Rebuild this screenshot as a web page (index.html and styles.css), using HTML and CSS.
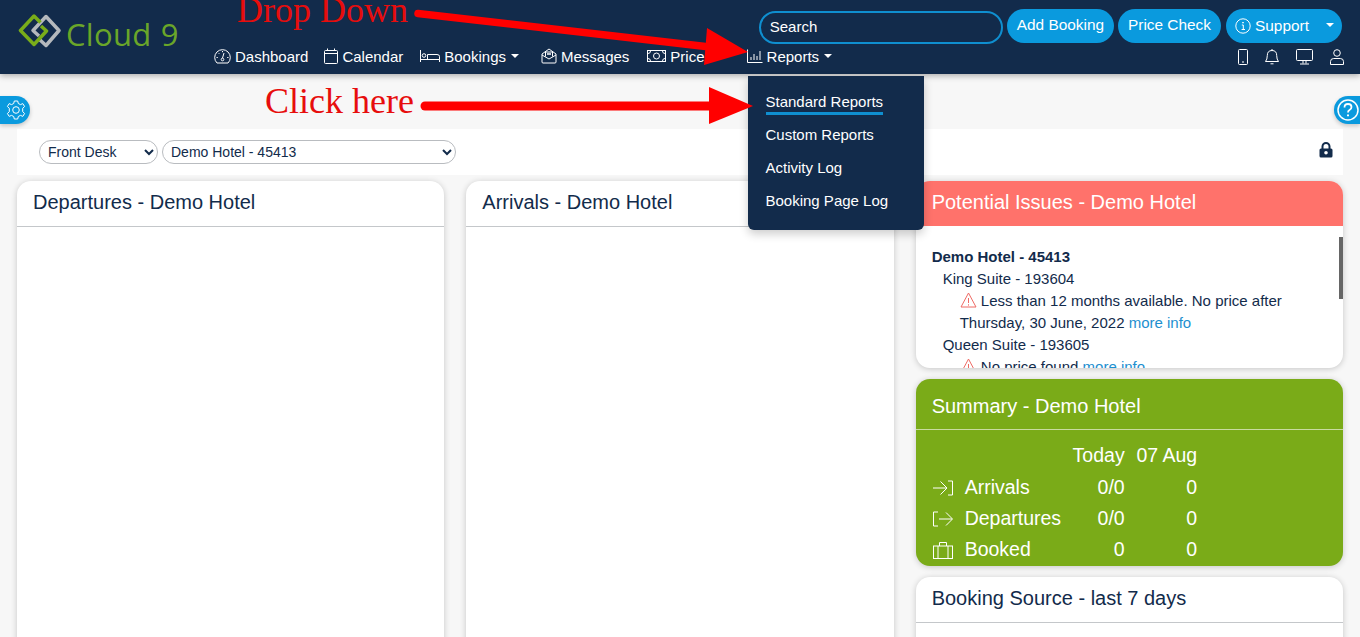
FILE: index.html
```html
<!DOCTYPE html>
<html lang="en">

<head>
    <meta charset="UTF-8">
    <meta name="viewport" content="width=device-width, initial-scale=1.0">
    <title>Cloud 9</title>
    <link rel="stylesheet" href="styles.css">
</head>

<body>
    <header class="topbar">
        <a class="logo">
            <svg class="logo-mark" width="44" height="34" viewBox="0 0 44 34" fill="none" stroke-width="3.500" stroke-linejoin="round">
                <path d="M21 25 L28 31.500 L41 16.500 L28 2.500 L15 16.500 L21 22" stroke="#b5b9bd" />
                <path d="M22.500 8.500 L16 2 L2.500 16.500 L16 30.500 L28.500 17 L23 12" stroke="#79ad1a" />
            </svg>
            <span class="logo-text">Cloud 9</span>
        </a>
        <div class="topbar-main">
            <div class="topbar-actions">
                <div class="search">Search</div>
                <button class="pill">Add Booking</button>
                <button class="pill">Price Check</button>
                <button class="pill pill-support">
                    <svg class="icon" width="16" height="16" viewBox="0 0 16 16">
                        <circle cx="8" cy="8" r="7.200" />
                        <path d="M6.800 7 H8.300 V11.500 M6.600 11.500 H10" />
                        <path d="M8 4 V5.200" stroke-width="1.600" />
                    </svg>
                    Support
                    <span class="caret caret-support"></span>
                </button>
            </div>
            <div class="topbar-nav">
                <nav class="nav">
                    <a class="nav-link">
                        <svg class="icon" width="17" height="16" viewBox="0 0 17 16">
                            <path d="M3 15 A7.800 7.800 0 1 1 14 15 Z" />
                            <path d="M8.500 10 L10 5 M2.500 9.500 H3.800 M13.200 9.500 H14.500 M4.500 5 L5.300 5.800 M8.500 3 V4.200" />
                            <circle cx="8.500" cy="11.500" r="1.300" />
                        </svg>
                        Dashboard
                    </a>
                    <a class="nav-link">
                        <svg class="icon" width="14" height="16" viewBox="0 0 14 16">
                            <rect x="0.500" y="2.500" width="13" height="13" rx="1" />
                            <path d="M0.500 5.500 H13.500 M3.500 0.500 V2.500 M10.500 0.500 V2.500" />
                        </svg>
                        Calendar
                    </a>
                    <a class="nav-link">
                        <svg class="icon" width="20" height="14" viewBox="0 0 20 14">
                            <path d="M0.500 1 V13 M0.500 10.500 H19.500 V13 M19.500 10.500 V7.500 Q19.500 5.500 17 5.500 H7.500 V10" />
                            <circle cx="4" cy="6.500" r="1.800" />
                        </svg>
                        Bookings
                        <span class="caret"></span>
                    </a>
                    <a class="nav-link">
                        <svg class="icon" width="16" height="16" viewBox="0 0 16 16">
                            <path d="M1 6 L8 1 L15 6 V14 Q15 15 14 15 H2 Q1 15 1 14 Z" />
                            <path d="M1 7 L8 11 L15 7 M4.500 8.500 V4 H11.500 V8.500" />
                            <path d="M6 6 H10" stroke-width="1.500" />
                        </svg>
                        Messages
                    </a>
                    <a class="nav-link">
                        <svg class="icon" width="19" height="14" viewBox="0 0 19 14">
                            <rect x="0.500" y="1.500" width="18" height="11" />
                            <circle cx="9.500" cy="7" r="3" />
                            <path d="M1 4.500 Q3.500 4.500 3.500 2 M18 4.500 Q15.500 4.500 15.500 2 M1 9.500 Q3.500 9.500 3.500 12 M18 9.500 Q15.500 9.500 15.500 12" />
                        </svg>
                        Price
                    </a>
                    <a class="nav-link nav-reports">
                        <svg class="icon" width="16" height="14" viewBox="0 0 16 14">
                            <path d="M0.500 0.500 V13.500 H15.500 M4 11 V8 M7 11 V5 M10 11 V7 M13 11 V2" />
                        </svg>
                        Reports
                        <span class="caret"></span>
                    </a>
                </nav>
                <div class="nav-tools">
                    <svg class="icon" width="10" height="16" viewBox="0 0 10 16">
                        <rect x="0.500" y="0.500" width="9" height="15" rx="1" />
                        <path d="M4.300 13 H5.700" stroke-width="1.400" />
                    </svg>
                    <svg class="icon" width="14" height="16" viewBox="0 0 14 16">
                        <path d="M0.500 12.500 Q2.300 10.500 2.300 6.500 Q2.300 1.500 7 1.500 Q11.700 1.500 11.700 6.500 Q11.700 10.500 13.500 12.500 Z" />
                        <path d="M5.500 14.800 H8.500 M7 0 V1.500" />
                    </svg>
                    <svg class="icon" width="17" height="16" viewBox="0 0 17 16">
                        <rect x="0.500" y="0.500" width="16" height="11" rx="1" />
                        <path d="M7 12 V14.500 M10 12 V14.500 M4 15 H13" />
                    </svg>
                    <svg class="icon" width="14" height="16" viewBox="0 0 14 16">
                        <circle cx="7" cy="4" r="3.300" />
                        <path d="M0.500 15.500 V12.500 Q0.500 9.500 3.700 9.500 H10.300 Q13.500 9.500 13.500 12.500 V15.500 Z" />
                    </svg>
                </div>
            </div>
        </div>
    </header>

    <div class="menu">
        <a class="menu-item menu-item-active">Standard Reports</a>
        <a class="menu-item">Custom Reports</a>
        <a class="menu-item">Activity Log</a>
        <a class="menu-item">Booking Page Log</a>
    </div>

    <a class="side-tab side-tab-left">
        <svg class="icon" width="20" height="20" viewBox="0 0 20 20">
            <path d="M8.300 1 H11.700 L12.300 3.500 L14.500 4.600 L16.800 3.600 L18.600 6.500 L16.700 8.300 V11.700 L18.600 13.500 L16.800 16.400 L14.500 15.400 L12.300 16.500 L11.700 19 H8.300 L7.700 16.500 L5.500 15.400 L3.200 16.400 L1.400 13.500 L3.300 11.700 V8.300 L1.400 6.500 L3.200 3.600 L5.500 4.600 L7.700 3.500 Z" stroke-linejoin="round" />
            <circle cx="10" cy="10" r="3.300" />
        </svg>
    </a>
    <a class="side-tab side-tab-right">
        <svg class="icon" width="22" height="22" viewBox="0 0 22 22">
            <circle cx="11" cy="11" r="10" stroke-width="1.500" />
            <path d="M7.500 8.500 Q7.500 5 11 5 Q14.500 5 14.500 8 Q14.500 10 12.500 11 Q11 11.800 11 13.500" stroke-width="1.800" />
            <path d="M11 15.500 V17.300" stroke-width="2" />
        </svg>
    </a>

    <main class="page">
        <div class="toolbar">
            <select class="picker picker-role">
                <option>Front Desk</option>
            </select>
            <select class="picker picker-hotel">
                <option>Demo Hotel - 45413</option>
            </select>
            <svg class="lock" width="14" height="16" viewBox="0 0 14 16">
                <path d="M3.500 7 V4.500 A3.500 3.500 0 0 1 10.500 4.500 V7" fill="none" stroke="#122b4b" stroke-width="2" />
                <path fill-rule="evenodd" d="M2 6.500 H12 Q13.500 6.500 13.500 8 V14 Q13.500 15.500 12 15.500 H2 Q0.500 15.500 0.500 14 V8 Q0.500 6.500 2 6.500 Z M7 9 A1.800 1.800 0 1 0 7 12.600 A1.800 1.800 0 1 0 7 9 Z" fill="#122b4b" />
            </svg>
        </div>

        <div class="columns">
            <section class="card card-tall">
                <h2 class="card-title">Departures - Demo Hotel</h2>
            </section>
            <section class="card card-tall">
                <h2 class="card-title">Arrivals - Demo Hotel</h2>
            </section>
            <div class="stack">
                <section class="card card-issues">
                    <h2 class="card-title">Potential Issues - Demo Hotel</h2>
                    <div class="issues">
                        <div class="issues-hotel">Demo Hotel - 45413</div>
                        <div class="issues-room">King Suite - 193604</div>
                        <div class="issues-note">
                            <svg class="warn" width="17" height="16" viewBox="0 0 17 16">
                                <path d="M8.500 1 L16 15 H1 Z M8.500 6 V11 M8.500 12.300 V13.600" />
                            </svg>
                            Less than 12 months available. No price after Thursday, 30 June, 2022 <a class="link">more info</a>
                        </div>
                        <div class="issues-room">Queen Suite - 193605</div>
                        <div class="issues-note">
                            <svg class="warn" width="17" height="16" viewBox="0 0 17 16">
                                <path d="M8.500 1 L16 15 H1 Z M8.500 6 V11 M8.500 12.300 V13.600" />
                            </svg>
                            No price found <a class="link">more info</a>
                        </div>
                    </div>
                    <div class="scroll-thumb"></div>
                </section>

                <section class="card card-summary">
                    <h2 class="card-title">Summary - Demo Hotel</h2>
                    <div class="summary">
                        <span></span><span></span><span class="num">Today</span><span class="num">07 Aug</span>

                        <svg class="icon" width="20" height="16" viewBox="0 0 20 16">
                            <path d="M0 8 H13 M7.500 1.500 L14 8 L7.500 14.500 M15 1 H19.500 V15 H15" />
                        </svg>
                        <span>Arrivals</span><span class="num">0/0</span><span class="num">0</span>

                        <svg class="icon" width="20" height="16" viewBox="0 0 20 16">
                            <path d="M5 1 H0.500 V15 H5 M6 8 H19 M13 1.500 L19.500 8 L13 14.500" />
                        </svg>
                        <span>Departures</span><span class="num">0/0</span><span class="num">0</span>

                        <svg class="icon" width="20" height="18" viewBox="0 0 20 18">
                            <rect x="0.500" y="5" width="19" height="12.500" />
                            <path d="M5 5 V17.500 M15 5 V17.500 M6.500 5 V1.500 H13.500 V5" />
                        </svg>
                        <span>Booked</span><span class="num">0</span><span class="num">0</span>
                    </div>
                </section>

                <section class="card card-tall">
                    <h2 class="card-title">Booking Source - last 7 days</h2>
                </section>
            </div>
        </div>
    </main>

    <!-- notes drawn over the screenshot -->
    <div class="note note-dropdown">Drop Down</div>
    <div class="note note-click">Click here</div>
    <svg class="note-arrows" width="1360" height="130" viewBox="0 0 1360 130">
        <path d="M418 13.500 L710 47" stroke="#f00" stroke-width="7.500" stroke-linecap="round" />
        <path d="M707 28 L748 52 L704 65 Z" fill="#f00" />
        <path d="M425 106 L712 106" stroke="#f00" stroke-width="9" stroke-linecap="round" />
        <path d="M709 87 L753 106 L709 124 Z" fill="#f00" />
    </svg>
</body>

</html>
```

FILE: styles.css
```css
* {
    box-sizing: border-box;
    font-family: 'Liberation Sans', Arial, sans-serif;
}

html,
body {
    height: 100%;
}

body {
    margin: 0;
    background-color: #f7f7f7;
    color: #122b4b;
    overflow: hidden;
    position: relative;
}

.icon {
    flex: none;
    fill: none;
    stroke: currentColor;
    stroke-width: 1;
}

/* top bar */
.topbar {
    display: flex;
    height: 74px;
    background-color: #122b4b;
    color: #fff;
    box-shadow: 0 2px 6px rgba(0, 0, 0, 0.3);
}

.logo {
    display: flex;
    align-items: flex-start;
    width: 214px;
    padding: 14px 0 0 18px;
    flex: none;
}

.logo-text {
    margin-left: 4px;
    font-family: 'Open Sans', sans-serif;
    font-size: 31px;
    line-height: 40px;
    letter-spacing: 0.300px;
    word-spacing: 1px;
    color: #6aa629;
}

.topbar-main {
    flex: 1;
    display: flex;
    flex-direction: column;
    padding: 9px 18px 0 0;
    min-width: 0;
}

.topbar-actions {
    display: flex;
    justify-content: flex-end;
    align-items: flex-start;
    gap: 4px;
    height: 34px;
}

.search {
    width: 244px;
    height: 33px;
    margin-top: 2px;
    padding-left: 9px;
    border: 2px solid #0f8fd0;
    border-radius: 17px;
    font-size: 15px;
    line-height: 27px;
}

.pill {
    display: flex;
    align-items: center;
    height: 34px;
    padding: 0 10px 3px;
    border: none;
    border-radius: 17px;
    background-color: #0a9ade;
    color: #fff;
    font-size: 15.400px;
}

.pill-support {
    gap: 4px;
    width: 116px;
    margin-left: 1px;
    padding-left: 9px;
    padding-bottom: 1px;
    position: relative;
}

.topbar-nav {
    display: flex;
    justify-content: space-between;
    align-items: center;
    height: 28px;
    margin-top: -1px;
}

.nav {
    display: flex;
    align-items: center;
}

.nav-link {
    display: flex;
    align-items: center;
    gap: 4px;
    margin-right: 18px;
    font-size: 15px;
    white-space: nowrap;
}

.nav-link:nth-child(1) {
    margin-right: 16px;
}

.nav-link:nth-child(2) {
    margin-right: 17px;
}

.nav-link:nth-child(3) {
    margin-right: 22px;
}

.nav-link:nth-child(5) {
    margin-right: 42px;
}

.caret {
    width: 0;
    height: 0;
    margin-left: 1px;
    border-left: 4px solid transparent;
    border-right: 4px solid transparent;
    border-top: 4px solid #fff;
}

.caret-support {
    position: absolute;
    right: 8px;
    top: 14px;
}

.nav-tools {
    display: flex;
    align-items: center;
    gap: 17px;
    margin: 2px -2px 0 0;
}

/* dropdown */
.menu {
    position: absolute;
    left: 748px;
    top: 76px;
    width: 176px;
    height: 154px;
    padding: 10px 17.500px;
    background-color: #122b4b;
    border-radius: 0 0 6px 6px;
    box-shadow: 0 4px 10px rgba(0, 0, 0, 0.2);
    z-index: 5;
}

.menu-item {
    display: table;
    color: #fff;
    font-size: 15px;
    line-height: 33px;
}

.menu-item-active {
    margin-bottom: 3px;
    padding-top: 5px;
    line-height: 21px;
    border-bottom: 3px solid #0f8fd0;
}

/* side tabs */
.side-tab {
    position: absolute;
    top: 96px;
    height: 28px;
    display: flex;
    align-items: center;
    background-color: #0a9ade;
    color: #fff;
    box-shadow: 0 2px 4px rgba(0, 0, 0, 0.2);
}

.side-tab-left {
    left: 0;
    width: 30px;
    padding-left: 6px;
    border-radius: 0 14px 14px 0;
}

.side-tab-right {
    right: 0;
    width: 26px;
    padding-left: 3px;
    border-radius: 14px 0 0 14px;
}

/* page body */
.page {
    padding: 55px 17px 0;
}

.toolbar {
    display: flex;
    align-items: center;
    gap: 4px;
    height: 46px;
    padding: 0 10px 0 22px;
    background-color: #fff;
}

.picker {
    height: 24px;
    padding: 0 0 0 4px;
    border: 1px solid #b9bcc0;
    border-radius: 12px;
    background-color: #fff;
    color: #122b4b;
    font-size: 14px;
}

.picker-role {
    width: 119px;
}

.picker-hotel {
    width: 294px;
}

.lock {
    margin: -4px 0 0 auto;
}

.columns {
    display: grid;
    grid-template-columns: repeat(3, 1fr);
    gap: 22px;
    margin-top: 6px;
}

.stack {
    display: flex;
    flex-direction: column;
    gap: 11px;
}

.card {
    position: relative;
    background-color: #fff;
    border-radius: 14px;
    box-shadow: 0 1px 6px rgba(0, 0, 0, 0.2);
    overflow: hidden;
}

.card-tall {
    height: 600px;
}

.card-title {
    height: 46px;
    margin: 0;
    padding: 0 16px;
    border-bottom: 1px solid #c4c7ca;
    font-size: 20px;
    font-weight: 400;
    line-height: 42px;
}

.card-issues {
    height: 187px;
    flex: none;
}

.card-issues .card-title {
    height: 45px;
    border-bottom: none;
    background-color: #ff726b;
    color: #fff;
}

.issues {
    padding: 20px 16px 0;
    font-size: 15px;
    line-height: 22px;
}

.issues-hotel {
    font-weight: 700;
}

.issues-room {
    padding-left: 11px;
}

.issues-note {
    padding: 0 40px 0 28px;
}

.warn {
    fill: none;
    stroke: #ee6a64;
    stroke-width: 1;
    vertical-align: -2px;
}

.link {
    color: #1d8fcf;
}

.scroll-thumb {
    position: absolute;
    right: 0;
    top: 56px;
    width: 4px;
    height: 62px;
    background-color: #666;
}

.card-summary {
    height: 187px;
    flex: none;
    background-color: #7aab18;
    color: #fff;
}

.card-summary .card-title {
    height: 51px;
    line-height: 54px;
    border-bottom-color: #c9dba0;
}

.summary {
    display: grid;
    grid-template-columns: 32px 100px 60px 72.500px;
    grid-template-rows: 33px;
    grid-auto-rows: 31px;
    align-items: center;
    padding: 9px 0 0 17px;
    font-size: 19.500px;
}

.num {
    text-align: right;
}

/* red notes */
.note {
    position: absolute;
    color: #e70d0d;
    font-family: 'Liberation Serif', serif;
    font-size: 36px;
    white-space: nowrap;
    z-index: 6;
}

.note-dropdown {
    left: 237px;
    top: -10px;
    line-height: 41px;
}

.note-click {
    left: 265px;
    top: 81px;
    line-height: 41px;
}

.note-arrows {
    position: absolute;
    left: 0;
    top: 0;
    z-index: 6;
    pointer-events: none;
}
```
